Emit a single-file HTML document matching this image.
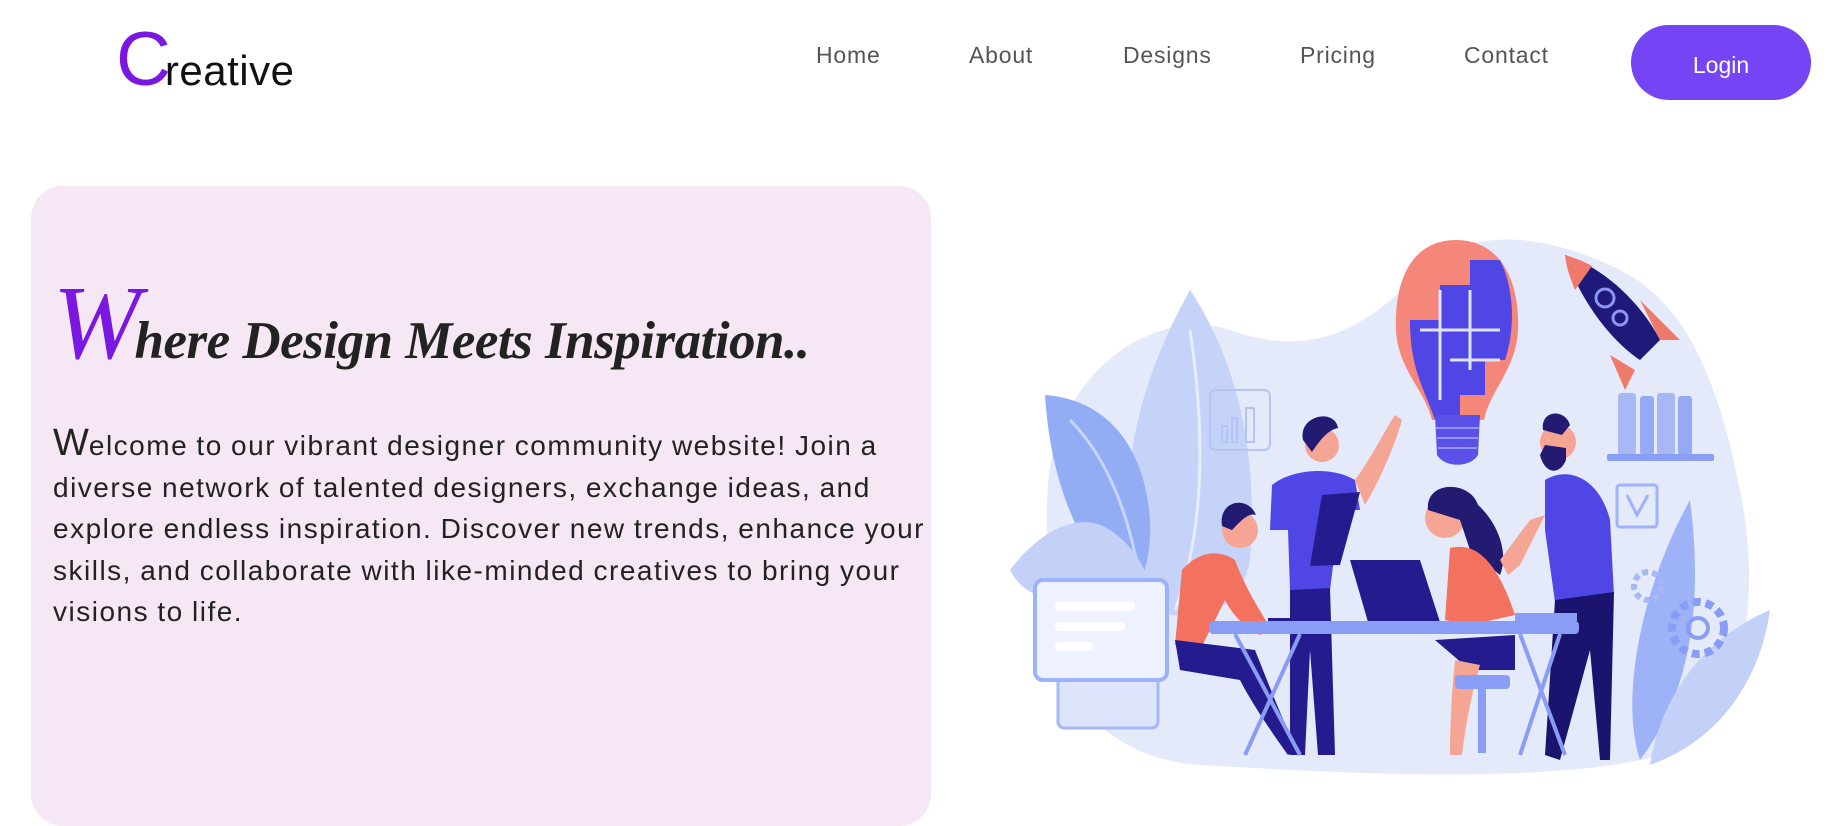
<!DOCTYPE html>
<html><head><meta charset="utf-8">
<style>
*{margin:0;padding:0;box-sizing:border-box}
html,body{width:1843px;height:780px;overflow:hidden;background:#fff;font-family:"Liberation Sans",sans-serif}
.logo{position:absolute;left:116px;top:22px;white-space:nowrap}
.logo .c{font-size:76px;color:#7a18e2;line-height:1}
.logo .r{font-size:42px;color:#111;position:relative;left:-6px;letter-spacing:0.5px}
.nav a{position:absolute;top:42px;font-size:23px;color:#555;text-decoration:none;line-height:26px;letter-spacing:0.8px}
.login{position:absolute;left:1631px;top:25px;width:180px;height:75px;border-radius:38px;background:#7444f5;color:#fff;font-size:23px;text-align:center;line-height:80px}
.card{position:absolute;left:31px;top:186px;width:900px;height:640px;background:#f5e7f3;border-radius:32px}
h1{position:absolute;left:53px;top:262px;font-family:"Liberation Serif",serif;font-style:italic;font-weight:bold;color:#222;font-size:53px;white-space:nowrap;letter-spacing:-0.5px}
h1 .w{font-size:105px;color:#7a18e2;font-weight:normal;letter-spacing:-6px}
p{position:absolute;left:53px;top:423px;width:880px;font-size:28px;line-height:41.5px;color:#222;letter-spacing:1.5px;word-spacing:-1px}
p .w{font-size:38px;letter-spacing:0}
</style></head><body>
<div class="logo"><span class="c">C</span><span class="r">reative</span></div>
<div class="nav">
<a style="left:816px">Home</a><a style="left:969px">About</a><a style="left:1123px">Designs</a><a style="left:1300px">Pricing</a><a style="left:1464px">Contact</a>
</div>
<div class="login">Login</div>
<div class="card"></div>
<h1><span class="w">W</span>here Design Meets Inspiration..</h1>
<p><span class="w">W</span>elcome to our vibrant designer community website! Join a diverse network of talented designers, exchange ideas, and explore endless inspiration. Discover new trends, enhance your skills, and collaborate with like-minded creatives to bring your visions to life.</p>

<svg style="position:absolute;left:1000px;top:230px" width="780" height="550" viewBox="0 0 780 550">
<path d="M60 200 C90 120 170 80 230 100 C300 125 360 110 420 40 C480 -10 560 10 620 40 C690 75 720 160 740 260 C760 360 750 470 680 520 C560 560 300 540 200 535 C110 530 40 460 45 360 C50 300 40 250 60 200Z" fill="#e5eafb"/>
<path d="M190 60 C230 120 260 210 250 330 C240 390 180 400 140 370 C110 250 140 150 190 60Z" fill="#c6d3f8"/>
<path d="M190 100 C205 200 205 300 175 380" stroke="#e8edfd" stroke-width="3" fill="none"/>
<path d="M45 165 C110 170 145 220 150 290 C152 330 140 360 130 360 C80 330 50 250 45 165Z" fill="#93adf5"/>
<path d="M70 190 C110 230 130 290 140 350" stroke="#c8d5fb" stroke-width="3" fill="none"/>
<path d="M10 340 C40 300 80 280 110 300 C140 320 150 350 150 360 L60 370 C40 370 20 360 10 340Z" fill="#c3d0f8"/>
<rect x="210" y="160" width="60" height="60" rx="6" fill="none" stroke="#b5c4f6" stroke-width="2"/>
<rect x="222" y="196" width="5" height="16" fill="none" stroke="#b5c4f6" stroke-width="2"/>
<rect x="232" y="188" width="5" height="24" fill="none" stroke="#b5c4f6" stroke-width="2"/>
<rect x="246" y="178" width="8" height="34" fill="none" stroke="#b5c4f6" stroke-width="2"/>
<path d="M456 10 C500 10 520 50 518 100 C516 140 490 160 484 190 L432 190 C425 160 398 140 396 100 C394 50 412 10 456 10Z" fill="#f4877a"/>
<path d="M410 90 L440 90 L440 55 L470 55 L470 30 L500 30 C515 60 515 100 505 130 L485 130 L485 165 L460 165 L460 190 L435 190 C425 160 410 140 410 90Z" fill="#4f46e5"/>
<path d="M420 100 H500 M440 60 V170 M470 60 V140 M450 130 H500" stroke="#dfe3ff" stroke-width="3" fill="none"/>
<path d="M435 185 H480 L478 225 C470 238 445 238 437 225Z" fill="#5b50e8"/>
<path d="M436 198 H479 M437 208 H478 M438 218 H477" stroke="#8e95f2" stroke-width="2"/>
<path d="M565 25 C610 40 645 80 660 110 L640 130 C610 110 580 70 565 25Z" fill="#1f1a7a"/>
<path d="M565 25 C575 28 585 32 592 36 L575 60 C570 48 566 36 565 25Z" fill="#f07a6a"/>
<path d="M640 70 L680 110 L660 110Z" fill="#f07a6a"/>
<path d="M610 125 L635 140 L625 160Z" fill="#f07a6a"/>
<circle cx="605" cy="68" r="9" fill="none" stroke="#8e95f2" stroke-width="3"/>
<circle cx="620" cy="88" r="7" fill="none" stroke="#8e95f2" stroke-width="3"/>
<rect x="618" y="163" width="18" height="62" rx="3" fill="#a8b8f5"/>
<rect x="640" y="166" width="14" height="59" rx="3" fill="#95a9f4"/>
<rect x="657" y="163" width="18" height="62" rx="3" fill="#a8b8f5"/>
<rect x="678" y="166" width="14" height="59" rx="3" fill="#95a9f4"/>
<rect x="607" y="224" width="107" height="7" rx="2" fill="#8a9df4"/>
<rect x="617" y="255" width="40" height="42" rx="3" fill="none" stroke="#9db2f7" stroke-width="3"/>
<path d="M627 265 L637 285 L648 265" fill="none" stroke="#9db2f7" stroke-width="3"/>
<path d="M690 270 C700 350 700 450 640 530 C620 470 640 360 690 270Z" fill="#9db2f7"/>
<path d="M770 380 C760 450 720 510 650 535 C660 470 700 410 770 380Z" fill="#c3d0f8"/>
<circle cx="698" cy="398" r="26" fill="none" stroke="#8a9df4" stroke-width="8" stroke-dasharray="8 5"/>
<circle cx="698" cy="398" r="10" fill="none" stroke="#8a9df4" stroke-width="4"/>
<circle cx="648" cy="356" r="14" fill="none" stroke="#a8b8f5" stroke-width="6" stroke-dasharray="6 4"/>
<rect x="58" y="438" width="100" height="60" rx="6" fill="#dde4fc" stroke="#a8b8f5" stroke-width="3"/>
<rect x="35" y="350" width="132" height="100" rx="8" fill="#eef1ff" stroke="#9db2f7" stroke-width="4"/>
<rect x="55" y="372" width="80" height="9" rx="4" fill="#fff"/>
<rect x="55" y="392" width="70" height="9" rx="4" fill="#fff"/>
<rect x="55" y="412" width="38" height="9" rx="4" fill="#fff"/>
<path d="M182 340 C200 320 220 320 235 330 C250 370 268 390 270 400 L260 405 C240 395 230 380 225 370 L200 420 L175 415Z" fill="#f2725f"/>
<path d="M175 410 L255 420 C275 470 290 510 300 520 L288 525 C270 500 250 470 240 450 L180 440Z" fill="#241c8e"/>
<circle cx="240" cy="300" r="18" fill="#f5a594"/>
<path d="M222 296 C218 270 248 265 256 285 C248 282 240 292 232 300Z" fill="#231a72"/>
<path d="M272 255 C290 240 330 235 355 250 L360 280 L340 280 L330 360 L290 360 L288 300 L270 300Z" fill="#4f46e5"/>
<path d="M355 250 C370 230 385 200 395 185 L402 190 C395 215 380 250 365 275Z" fill="#f5a594"/>
<path d="M290 360 L330 358 L335 525 L318 525 L310 420 L305 525 L290 525Z" fill="#241c8e"/>
<circle cx="322" cy="215" r="17" fill="#f5a594"/>
<path d="M303 210 C298 185 335 178 338 198 C328 200 320 210 312 222Z" fill="#231a72"/>
<path d="M322 265 L360 262 L340 335 L310 336Z" fill="#241c8e"/>
<path d="M350 330 L420 330 L440 392 L368 392Z" fill="#241c8e"/>
<rect x="268" y="388" width="60" height="5" fill="#241c8e"/>
<circle cx="445" cy="288" r="20" fill="#f5a594"/>
<path d="M428 280 C425 250 470 250 478 275 C495 290 510 320 500 345 L470 320 L460 290Z" fill="#231a72"/>
<path d="M450 318 C480 310 500 340 515 385 L470 395 L445 390Z" fill="#f2725f"/>
<path d="M435 410 L515 405 L515 440 L470 440Z" fill="#241c8e"/>
<path d="M455 430 L480 435 C470 470 465 500 462 525 L450 525 C450 490 452 460 455 430Z" fill="#f5a594"/>
<rect x="455" y="445" width="55" height="14" rx="4" fill="#8a9df4"/>
<rect x="478" y="458" width="8" height="65" fill="#8a9df4"/>
<path d="M545 250 C570 235 600 250 610 290 L614 365 L555 372 L545 300Z" fill="#4f46e5"/>
<path d="M555 370 L614 362 L610 530 L600 530 L590 420 L560 530 L545 525Z" fill="#1a146f"/>
<circle cx="558" cy="212" r="18" fill="#f5a594"/>
<path d="M540 225 C545 245 560 245 566 230 L566 218 L545 215Z" fill="#231a72"/>
<path d="M543 200 C540 180 565 178 570 195 L562 205Z" fill="#231a72"/>
<path d="M545 285 L520 335 L508 345 L500 330 L530 290Z" fill="#f5a594"/>
<rect x="209" y="391" width="370" height="13" rx="4" fill="#8a9df4"/>
<path d="M235 404 L300 525 M300 404 L245 525 M520 404 L565 525 M560 404 L520 525" stroke="#8a9df4" stroke-width="4"/>
<rect x="515" y="383" width="62" height="8" fill="#8a9df4"/>
</svg>
</body></html>
